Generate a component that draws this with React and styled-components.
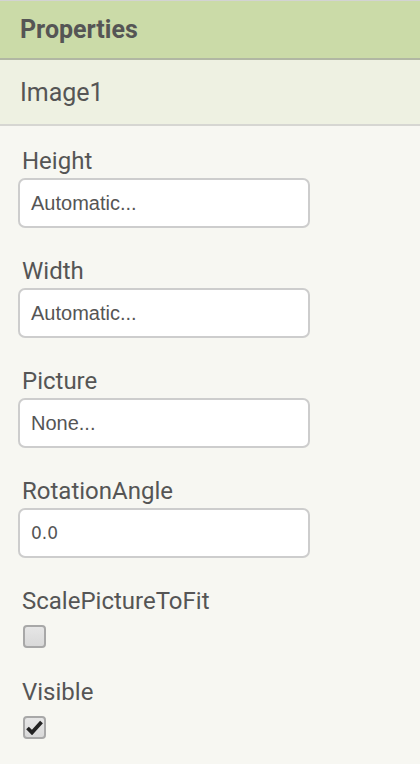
import styled, { createGlobalStyle } from 'styled-components'

const GlobalStyle = createGlobalStyle`
  html, body {
    margin: 0;
    padding: 0;
    background: #f7f7f2;
  }
  body {
    font-family: Roboto, "Liberation Sans", sans-serif;
  }
`

const Panel = styled.div`
  width: 420px;
  min-height: 764px;
  background: #f7f7f2;
  border-top: 1px solid #d3d3d3;
`

const Header = styled.div`
  height: 57px;
  background: #cbdba8;
  border-bottom: 2px solid #b1b7a3;
  display: flex;
  align-items: center;
  padding-left: 20px;
  font-family: Roboto, sans-serif;
  font-weight: 700;
  font-size: 25px;
  color: #555;
`

const Component = styled.div`
  height: 64px;
  background: #eef1e2;
  border-bottom: 2px solid #d6d6d2;
  display: flex;
  align-items: center;
  padding-left: 20px;
  font-family: Roboto, sans-serif;
  font-size: 25px;
  color: #555;
`

const List = styled.div`
  padding: 20px 0 0 18px;
  display: flex;
  flex-direction: column;
  gap: 28px;
`

const Property = styled.div`
  display: flex;
  flex-direction: column;
`

const Label = styled.div`
  height: 28px;
  line-height: 30px;
  padding-left: 4px;
  font-family: Roboto, sans-serif;
  font-size: 24px;
  color: #555;
`

const Field = styled.div`
  box-sizing: border-box;
  margin-top: 4px;
  width: 292px;
  height: 50px;
  border: 2px solid #cdcdcd;
  border-radius: 7px;
  background: #fff;
  display: flex;
  align-items: center;
  padding-left: 11px;
  font-family: ${p => (p.$mono ? '"DejaVu Sans"' : '"Liberation Sans"')}, sans-serif;
  font-size: ${p => (p.$mono ? '17px' : '20px')};
  color: #555;
`

const Check = styled.div`
  box-sizing: border-box;
  margin: 11px 0 1px 5px;
  width: 23px;
  height: 23px;
  border: 2px solid #a8a8a8;
  border-radius: 4px;
  background: linear-gradient(#e6e6e6, #d9d9d9);
  display: flex;
  align-items: center;
  justify-content: center;
`

const Tick = () => (
  <svg width="17" height="15" viewBox="0 0 17 15">
    <path d="M1.5 8 L6 12.5 L15.5 2" fill="none" stroke="#222" strokeWidth="3.8" strokeLinejoin="miter" />
  </svg>
)

const fields = [
  { label: 'Height', value: 'Automatic...' },
  { label: 'Width', value: 'Automatic...' },
  { label: 'Picture', value: 'None...' },
  { label: 'RotationAngle', value: '0.0', mono: true },
]

const checks = [
  { label: 'ScalePictureToFit', checked: false },
  { label: 'Visible', checked: true },
]

export default function App() {
  return (
    <>
      <GlobalStyle />
      <Panel>
        <Header>Properties</Header>
        <Component>Image1</Component>
        <List>
          {fields.map(f => (
            <Property key={f.label}>
              <Label>{f.label}</Label>
              <Field $mono={f.mono}>{f.value}</Field>
            </Property>
          ))}
          {checks.map(c => (
            <Property key={c.label}>
              <Label>{c.label}</Label>
              <Check>{c.checked && <Tick />}</Check>
            </Property>
          ))}
        </List>
      </Panel>
    </>
  )
}
